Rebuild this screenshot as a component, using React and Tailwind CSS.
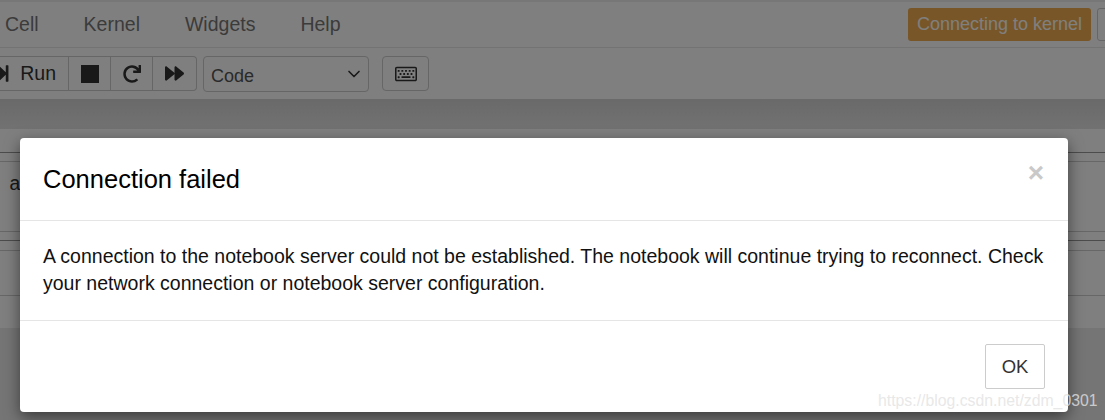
import { FaStepForward, FaRedo, FaForward, FaRegKeyboard } from "react-icons/fa";
import { ChevronDown } from "lucide-react";

const menuItems = ["Cell", "Kernel", "Widgets", "Help"];

function ToolButton({ children, className }) {
  return (
    <div className={`flex items-center h-full border-r border-[#ccc] ${className}`}>
      {children}
    </div>
  );
}

function App() {
  return (
    <div className="relative h-[420px] w-[1105px] overflow-hidden bg-[#eaeaea] font-['Liberation_Sans',sans-serif]">
      {/* Notebook header */}
      <div className="bg-white">
        <div className="flex items-center justify-between h-[48px] border-t-2 border-b border-t-[#eee] border-b-[#e7e7e7]">
          <div className="flex gap-[45px] pl-[5px] text-[19.5px] text-[#777]">
            {menuItems.map((item) => (
              <span key={item}>{item}</span>
            ))}
          </div>
          <div className="flex gap-[6px]">
            <div className="flex items-center justify-center w-[183px] h-[33px] bg-[#f0ad4e] rounded-[3px] text-[18px] text-white">
              Connecting to kernel
            </div>
            <div className="w-[20px] h-[33px] border border-[#ccc] rounded-l-[3px] -mr-[12px]" />
          </div>
        </div>

        {/* Toolbar */}
        <div className="flex items-start h-[51px] pt-[8px]">
          <div className="flex items-center h-[35px] w-[197px] border border-l-0 border-[#ccc] rounded-r-[4px] text-[#333]">
            <ToolButton className="w-[69px] justify-end gap-[8px] pr-[12px] text-[19.5px]">
              <FaStepForward className="w-[19px] h-[19px] shrink-0" />
              <span>Run</span>
            </ToolButton>
            <ToolButton className="w-[42px] justify-center">
              <svg width="18" height="18" viewBox="0 0 18 18" fill="currentColor">
                <rect width="18" height="18" />
              </svg>
            </ToolButton>
            <ToolButton className="w-[42px] justify-center">
              <FaRedo className="w-[18px] h-[18px]" />
            </ToolButton>
            <div className="flex items-center justify-center w-[43px] h-full">
              <FaForward className="w-[19px] h-[19px]" />
            </div>
          </div>
          <div className="flex items-center justify-between w-[166px] h-[36px] ml-[6px] pl-[7px] pr-[4px] border border-[#ccc] rounded-[4px] text-[18px] text-[#555]">
            <span className="pt-[4px]">Code</span>
            <ChevronDown className="w-[20px] h-[20px] text-[#333]" strokeWidth={2} />
          </div>
          <div className="flex items-center justify-center w-[47px] h-[35px] ml-[13px] border border-[#ccc] rounded-[4px] text-[#333]">
            <FaRegKeyboard className="w-[22px] h-[22px]" />
          </div>
        </div>
      </div>

      {/* Band under the toolbar */}
      <div className="h-[30px] bg-gradient-to-b from-[#d4d4d4] to-[#e4e4e4]" />

      {/* Notebook cells */}
      <div className="h-[199px] bg-white">
        <div className="h-[23px]" />
        <div className="h-[1px] bg-[#999]" />
        <div className="h-[8px]" />
        <div className="h-[1px] bg-[#cfcfcf]" />
        <div className="h-[69px] pt-[11px] pl-[9px] font-['Liberation_Mono',monospace] text-[20px] leading-[24px] text-[#333]">
          a
        </div>
        <div className="h-[1px] bg-[#cfcfcf]" />
        <div className="h-[8px]" />
        <div className="h-[1px] bg-[#999]" />
        <div className="h-[9px]" />
        <div className="h-[1px] bg-[#cfcfcf]" />
        <div className="h-[44px]" />
        <div className="h-[1px] bg-[#cfcfcf]" />
      </div>

      {/* Backdrop and dialog */}
      <div className="absolute inset-0 bg-black/50 pt-[138px] pl-[20px]">
        <div className="flex flex-col w-[1048px] h-[274px] bg-white rounded-[4px] shadow-[0_5px_15px_rgba(0,0,0,0.5)]">
          <div className="relative flex items-center h-[83px] px-[23px] border-b border-[#e5e5e5] pt-[1px]">
            <h4 className="text-[25.5px] text-black">Connection failed</h4>
            <span className="absolute right-[24px] top-[21px] text-[28px] leading-[28px] font-bold text-[#c9c9c9]">×</span>
          </div>
          <div className="h-[100px] px-[23px] pt-[22px] border-b border-[#e5e5e5] text-[19.5px] leading-[27px] text-[#111]">
            A connection to the notebook server could not be established. The notebook will continue trying to reconnect. Check your network connection or notebook server configuration.
          </div>
          <div className="flex justify-end pt-[23px] pr-[23px]">
            <button className="w-[60px] h-[45px] border border-[#ccc] rounded-[2px] bg-white text-[18.5px] text-[#333]">
              OK
            </button>
          </div>
        </div>
      </div>

      {/* Watermark */}
      <span className="absolute left-[878px] top-[391px] text-[15.8px] leading-[20px] text-[rgba(226,226,226,0.8)] whitespace-nowrap">
        https://blog.csdn.net/zdm_0301
      </span>
    </div>
  );
}

export default App;
